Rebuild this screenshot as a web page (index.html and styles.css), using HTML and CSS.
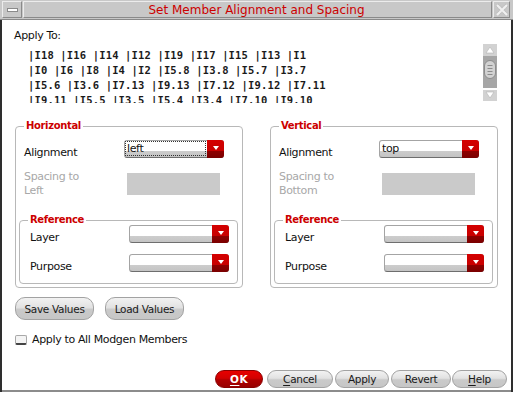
FILE: index.html
```html
<!DOCTYPE html>
<html lang="en">
<head>
    <meta charset="UTF-8">
    <title>Set Member Alignment and Spacing</title>
    <link rel="stylesheet" href="styles.css">
</head>
<body>
    <div class="window">
        <div class="titlebar">
            <div class="tb-part tb-menu"><span class="menu-glyph"></span></div>
            <div class="tb-part tb-title">Set Member Alignment and Spacing</div>
            <div class="tb-part tb-close">
                <svg width="14" height="14" viewBox="0 0 14 14">
                    <path d="M2 2 L12 12 M12 2 L2 12" stroke="#bcbcbc" stroke-width="4" stroke-dasharray="1 1" fill="none"/>
                    <path d="M2 2 L12 12 M12 2 L2 12" stroke="#f0f0f0" stroke-width="2" fill="none"/>
                </svg>
            </div>
        </div>

        <div class="content">
            <div class="apply-label">Apply To:</div>
            <div class="apply-row">
                <div class="apply-list">
                    <div class="apply-line">|I18 |I16 |I14 |I12 |I19 |I17 |I15 |I13 |I1</div>
                    <div class="apply-line">|I0 |I6 |I8 |I4 |I2 |I5.8 |I3.8 |I5.7 |I3.7</div>
                    <div class="apply-line">|I5.6 |I3.6 |I7.13 |I9.13 |I7.12 |I9.12 |I7.11</div>
                    <div class="apply-line">|I9.11 |I5.5 |I3.5 |I5.4 |I3.4 |I7.10 |I9.10</div>
                </div>
                <svg class="vscroll" width="14" height="59" viewBox="0 0 14 59">
                    <rect x="0" y="0" width="14" height="12" fill="#d2d2d2"/>
                    <path d="M7 3 L11 9 L3 9 Z" fill="#fff" stroke="#b4b4b4" stroke-width="0.6"/>
                    <rect x="0" y="12" width="14" height="32" fill="#a6a6a6"/>
                    <rect x="1.5" y="16.5" width="11" height="18" rx="5.5" fill="#d2d2d2" stroke="#8c8c8c"/>
                    <path d="M4.5 21.5 H9.5 M4.5 24.5 H9.5 M4.5 27.5 H9.5 M4.5 30.5 H9.5" stroke="#8c8c8c" stroke-width="1"/>
                    <rect x="0" y="46" width="14" height="11" fill="#d2d2d2"/>
                    <path d="M3 48 L11 48 L7 54 Z" fill="#fff" stroke="#b4b4b4" stroke-width="0.6"/>
                </svg>
            </div>

            <div class="groups">
                <fieldset class="group">
                    <legend>Horizontal</legend>
                    <div class="row row-first">
                        <span class="lbl">Alignment</span>
                        <div class="combo"><span class="combo-text focus">left</span><span class="combo-btn"></span></div>
                    </div>
                    <div class="row row-spacing">
                        <span class="lbl disabled">Spacing to<br>Left</span>
                        <div class="num-field"></div>
                    </div>
                    <fieldset class="subgroup">
                        <legend>Reference</legend>
                        <div class="row sub-first">
                            <span class="lbl sub-lbl">Layer</span>
                            <div class="combo"><span class="combo-text"></span><span class="combo-btn"></span></div>
                        </div>
                        <div class="row sub-second">
                            <span class="lbl sub-lbl">Purpose</span>
                            <div class="combo"><span class="combo-text"></span><span class="combo-btn"></span></div>
                        </div>
                    </fieldset>
                </fieldset>

                <fieldset class="group">
                    <legend>Vertical</legend>
                    <div class="row row-first">
                        <span class="lbl">Alignment</span>
                        <div class="combo"><span class="combo-text">top</span><span class="combo-btn"></span></div>
                    </div>
                    <div class="row row-spacing">
                        <span class="lbl disabled">Spacing to<br>Bottom</span>
                        <div class="num-field"></div>
                    </div>
                    <fieldset class="subgroup">
                        <legend>Reference</legend>
                        <div class="row sub-first">
                            <span class="lbl sub-lbl">Layer</span>
                            <div class="combo"><span class="combo-text"></span><span class="combo-btn"></span></div>
                        </div>
                        <div class="row sub-second">
                            <span class="lbl sub-lbl">Purpose</span>
                            <div class="combo"><span class="combo-text"></span><span class="combo-btn"></span></div>
                        </div>
                    </fieldset>
                </fieldset>
            </div>

            <div class="value-buttons">
                <button class="btn">Save Values</button>
                <button class="btn">Load Values</button>
            </div>

            <label class="check-row">
                <span class="checkbox"></span>
                <span>Apply to All Modgen Members</span>
            </label>

            <div class="dialog-buttons">
                <button class="btn btn-ok"><u>O</u>K</button>
                <button class="btn btn-cancel"><u>C</u>ancel</button>
                <button class="btn btn-apply">Apply</button>
                <button class="btn btn-revert">Revert</button>
                <button class="btn btn-help"><u>H</u>elp</button>
            </div>
        </div>
    </div>
</body>
</html>
```

FILE: styles.css
```css
body {
    margin: 0;
    background: #fff;
    font-family: "DejaVu Sans", sans-serif;
    font-size: 11px;
    letter-spacing: -0.35px;
    color: #111;
}
.window {
    width: 513px;
    height: 392px;
    display: flex;
    flex-direction: column;
    background: #fff;
    box-shadow: inset 2px 0 #2e2e2e, inset -2px 0 #2e2e2e, inset 0 -2px #8c8c8c;
}

/* title bar */
.titlebar {
    height: 20px;
    box-sizing: border-box;
    display: flex;
    gap: 1px;
    padding: 1px 3px 1px 2px;
    background: #c8c8c8;
    border-bottom: 1px solid #8a8a8a;
}
.tb-part {
    box-sizing: border-box;
    border-top: 1px solid #ececec;
    border-left: 1px solid #ececec;
    border-right: 1px solid #8a8a8a;
    border-bottom: 1px solid #8a8a8a;
    display: flex;
    align-items: center;
    justify-content: center;
}
.tb-menu {
    width: 20px;
}
.menu-glyph {
    width: 9px;
    height: 2px;
    background: #fff;
    border: 1px solid #8a8a8a;
}
.tb-title {
    flex: 1;
    color: #cc0000;
    font-size: 12px;
    letter-spacing: 0;
    padding-right: 2px;
}
.tb-close {
    width: 17px;
}

/* content */
.content {
    flex: 1;
    display: flex;
    flex-direction: column;
    padding: 9px 0 4px 0;
}
.apply-label {
    margin-left: 14px;
    height: 14px;
    line-height: 14px;
}
.apply-row {
    display: flex;
    margin-top: 1px;
    height: 61px;
}
.apply-list {
    margin-left: 28px;
    width: 455px;
    height: 59px;
    box-sizing: border-box;
    padding-top: 4px;
    overflow: hidden;
    font-family: "DejaVu Sans Mono", monospace;
    font-weight: bold;
    font-size: 10.5px;
    letter-spacing: 0.15px;
    line-height: 15px;
    color: #1a1a1a;
}
.apply-line {
    white-space: pre;
}
.vscroll {
    display: block;
}

/* group boxes */
.groups {
    display: grid;
    grid-template-columns: 228px 228px;
    column-gap: 27px;
    margin: 15px 0 0 15px;
}
fieldset {
    margin: 0;
    padding: 0;
    min-width: 0;
    border: 1px solid #b8b8b8;
    border-radius: 4px;
}
legend {
    margin-left: 8px;
    padding: 0 2px;
    color: #cc0000;
    font-weight: bold;
    font-size: 10px;
    line-height: 12px;
}
.group {
    padding-bottom: 3px;
}
.row {
    display: flex;
    height: 20px;
}
.row-first {
    margin-top: 8px;
}
.row-spacing {
    margin-top: 10px;
    height: 28px;
}
.lbl {
    width: 108px;
    flex: none;
    padding-left: 8px;
    box-sizing: border-box;
    line-height: 14px;
    margin-top: 6px;
}
.lbl.disabled {
    color: #a8a8a8;
    margin-top: 0;
}
.num-field {
    width: 93px;
    height: 22px;
    margin: 3px 0 0 3px;
    background: #cacaca;
}
.subgroup {
    margin: 16px 4px 0 3px;
    padding-bottom: 9px;
}
.sub-first {
    margin-top: -1px;
}
.sub-second {
    margin-top: 9px;
}
.sub-lbl {
    width: 109px;
    padding-left: 10px;
}

/* combo box */
.combo {
    width: 100px;
    height: 18px;
    box-sizing: border-box;
    display: flex;
    border: 1px solid #a4a4a4;
    border-bottom-color: #6e6e6e;
    border-radius: 3px;
    background: linear-gradient(#fff 0, #fff 62%, #cdcdcd 62%, #c4c4c4 100%);
}
.combo-text {
    flex: 1;
    margin: 0 1px 1px 0;
    line-height: 13px;
    padding-left: 1px;
    border: 1px solid transparent;
}
.combo-text.focus {
    border: 1px dotted #333;
}
.combo-btn {
    width: 17px;
    margin: -1px -1px -1px 0;
    border-radius: 0 3px 3px 0;
    background: linear-gradient(#d40000 0, #c80000 62%, #8e0000 62%, #7a0000 100%);
    display: flex;
    justify-content: center;
    padding-top: 6px;
    box-sizing: border-box;
}
.combo-btn::after {
    content: "";
    width: 0;
    height: 0;
    border-left: 3.5px solid transparent;
    border-right: 3.5px solid transparent;
    border-top: 4px solid #fff;
}

/* buttons */
.btn {
    font-family: "DejaVu Sans", sans-serif;
    font-size: 10.5px;
    letter-spacing: -0.3px;
    color: #1a1a1a;
    height: 18px;
    padding: 0;
    border: 1px solid #a2a2a2;
    border-radius: 9px;
    background: linear-gradient(#f2f2f2 0, #e2e2e2 45%, #cacaca 55%, #c6c6c6 100%);
}
.value-buttons {
    display: flex;
    gap: 11px;
    margin: 9px 0 0 15px;
}
.value-buttons .btn {
    width: 79px;
    height: 23px;
    border-radius: 10px;
}
.check-row {
    display: flex;
    align-items: center;
    gap: 5px;
    margin: 13px 0 0 15px;
    line-height: 14px;
}
.checkbox {
    width: 12px;
    height: 10px;
    box-sizing: border-box;
    border: 1px solid #a8a8a8;
    border-bottom: 2px solid #444;
    border-radius: 2px;
    background: #f4f4f4;
}
.dialog-buttons {
    display: flex;
    margin: auto 0 0 215px;
}
.btn u {
    text-decoration-thickness: 1px;
    text-underline-offset: 2px;
}
.btn-ok {
    width: 48px;
    color: #fff;
    font-weight: bold;
    letter-spacing: 0.5px;
    border-color: #8a0000;
    background: linear-gradient(#e80000 0, #d20000 45%, #b00000 55%, #980000 100%);
}
.btn-cancel {
    width: 66px;
    margin-left: 4px;
}
.btn-apply {
    width: 54px;
    margin-left: 2px;
}
.btn-revert {
    width: 60px;
    margin-left: 2px;
}
.btn-help {
    width: 55px;
    margin-left: 1px;
}
```
